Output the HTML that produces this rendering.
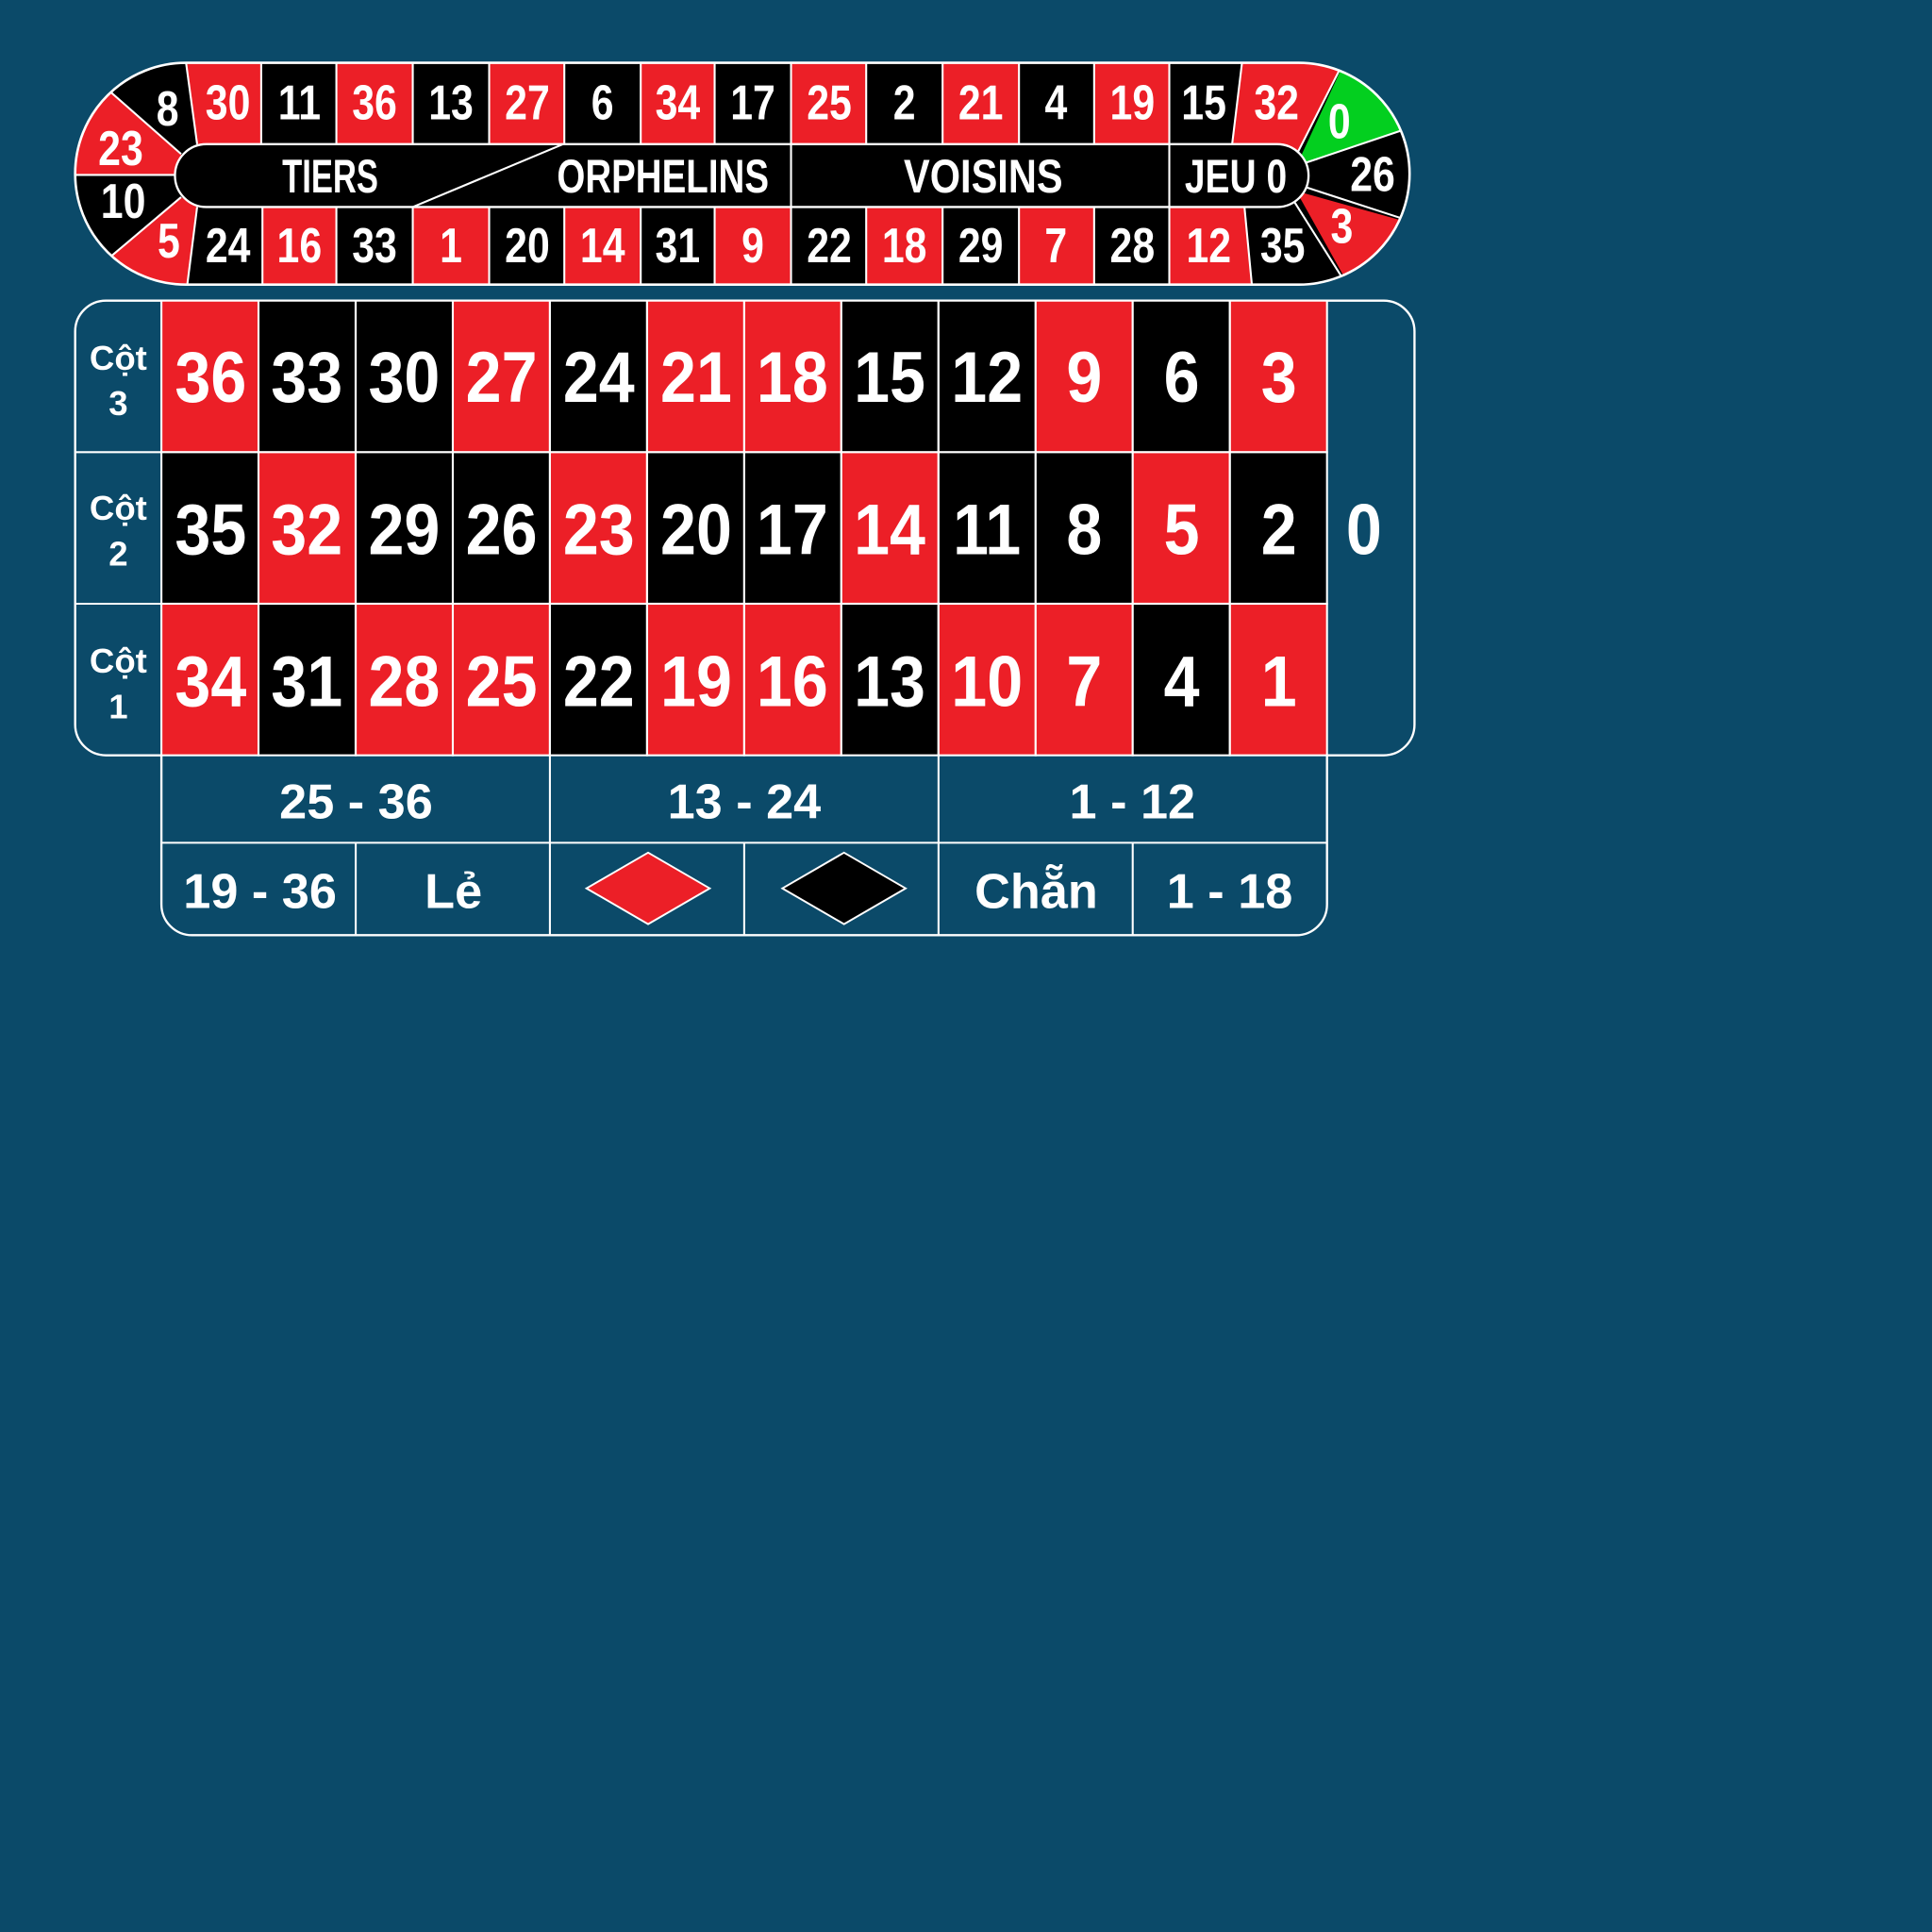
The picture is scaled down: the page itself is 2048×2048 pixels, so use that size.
<!DOCTYPE html>
<html><head><meta charset="utf-8"><style>
html,body{margin:0;padding:0;background:#0b4a69;}
svg{display:block}
text{font-family:"Liberation Sans",sans-serif;font-weight:bold;fill:#fff;text-anchor:middle}
.n text{transform-box:fill-box;transform-origin:center;transform:scaleX(.82)}
.g text{transform-box:fill-box;transform-origin:center;transform:scaleX(.9)}
</style></head><body>
<svg width="2048" height="2048" viewBox="0 0 1568 1568" xmlns="http://www.w3.org/2000/svg">
<rect width="1568" height="1568" fill="#0b4a69"/>
<defs><clipPath id="rt"><path d="M151,51 L1054,51 A90,90 0 0 1 1054,231 L151,231 A90,90 0 0 1 151,51 Z"/></clipPath></defs>
<g clip-path="url(#rt)">
<rect x="0" y="0" width="1200" height="260" fill="#000"/>
<g fill="#ec1f27">
<polygon points="147,125 40,31 0,31 0,142 147,142"/>
<polygon points="147,160 40,252 149,252 160,168"/>
<polygon points="150,40 212,40 212,117 160,117"/>
<rect x="273" y="40" width="62" height="77"/><rect x="397" y="40" width="61" height="77"/>
<rect x="520" y="40" width="60" height="77"/><rect x="642" y="40" width="61" height="77"/>
<rect x="765" y="40" width="62" height="77"/><rect x="888" y="40" width="61" height="77"/>
<polygon points="1009,40 1096,40 1045,140 997,140"/>
<polygon points="1052,155 1170,188 1170,250 1105,250"/>
<rect x="213" y="168" width="60" height="80"/><rect x="335" y="168" width="62" height="80"/>
<rect x="458" y="168" width="62" height="80"/><rect x="580" y="168" width="62" height="80"/>
<rect x="703" y="168" width="62" height="80"/><rect x="827" y="168" width="61" height="80"/>
<polygon points="949,168 1010,168 1017,250 949,250"/>
</g>
<polygon points="1096,40 1170,40 1170,95 1052,135" fill="#03cf1f"/>
<g stroke="#fff" stroke-width="1.6" fill="none">
<line x1="147" y1="125" x2="89" y2="74"/><line x1="61" y1="142" x2="142" y2="142"/><line x1="147" y1="160" x2="89" y2="209"/>
<line x1="151" y1="51" x2="160" y2="117"/><line x1="160" y1="168" x2="152" y2="231"/>
<path d="M212,51V117M273,51V117M335,51V117M397,51V117M458,51V117M520,51V117M580,51V117M642,51V117M703,51V117M765,51V117M827,51V117M888,51V117M949,51V117"/>
<path d="M213,168V231M273,168V231M335,168V231M397,168V231M458,168V231M520,168V231M580,168V231M642,168V231M703,168V231M765,168V231M827,168V231M888,168V231M949,168V231"/>
<line x1="1008" y1="51" x2="1000" y2="117"/><line x1="1087" y1="57" x2="1050" y2="130"/>
<line x1="1137" y1="106" x2="1060" y2="132"/><line x1="1137" y1="177" x2="1060" y2="152"/>
<line x1="1050" y1="163" x2="1091" y2="228"/><line x1="1010" y1="168" x2="1016" y2="231"/>
</g>
</g>
<path d="M151,51 L1054,51 A90,90 0 0 1 1054,231 L151,231 A90,90 0 0 1 151,51 Z" fill="none" stroke="#fff" stroke-width="2"/>
<rect x="142" y="117" width="920" height="51" rx="25.5" fill="#000" stroke="#fff" stroke-width="1.8"/>
<g stroke="#fff" stroke-width="1.6"><line x1="457" y1="117" x2="335" y2="168"/><line x1="642" y1="117" x2="642" y2="168"/><line x1="949" y1="117" x2="949" y2="168"/></g>
<g font-size="38">
<text x="268" y="156" textLength="78" lengthAdjust="spacingAndGlyphs">TIERS</text>
<text x="538" y="156" textLength="172" lengthAdjust="spacingAndGlyphs">ORPHELINS</text>
<text x="798" y="156" textLength="129" lengthAdjust="spacingAndGlyphs">VOISINS</text>
<text x="1003" y="156" textLength="83" lengthAdjust="spacingAndGlyphs">JEU 0</text>
</g>
<g font-size="40" class="n">
<text x="185" y="97">30</text><text x="243" y="97">11</text><text x="304" y="97">36</text><text x="366" y="97">13</text><text x="428" y="97">27</text><text x="489" y="97">6</text><text x="550" y="97">34</text><text x="611" y="97">17</text><text x="673" y="97">25</text><text x="734" y="97">2</text><text x="796" y="97">21</text><text x="857" y="97">4</text><text x="919" y="97">19</text><text x="977" y="97">15</text><text x="1036" y="97">32</text>
<text x="185" y="213">24</text><text x="243" y="213">16</text><text x="304" y="213">33</text><text x="366" y="213">1</text><text x="428" y="213">20</text><text x="489" y="213">14</text><text x="550" y="213">31</text><text x="611" y="213">9</text><text x="673" y="213">22</text><text x="734" y="213">18</text><text x="796" y="213">29</text><text x="857" y="213">7</text><text x="919" y="213">28</text><text x="981" y="213">12</text><text x="1041" y="213">35</text>
<text x="136" y="102">8</text><text x="98" y="134">23</text><text x="100" y="177">10</text><text x="137" y="209">5</text>
<text x="1087" y="112">0</text><text x="1114" y="155">26</text><text x="1089" y="197">3</text>
</g>
<path d="M86,244 L1123,244 A25,25 0 0 1 1148,269 L1148,588 A25,25 0 0 1 1123,613 L1077,613 L1077,734 A25,25 0 0 1 1052,759 L156,759 A25,25 0 0 1 131,734 L131,613 L86,613 A25,25 0 0 1 61,588 L61,269 A25,25 0 0 1 86,244 Z" fill="#0b4a69" stroke="#fff" stroke-width="1.8"/>
<g stroke="#fff" stroke-width="1.6">
<rect x="131" y="244" width="78.8" height="123" fill="#ec1f27"/><rect x="209.8" y="244" width="78.8" height="123" fill="#000"/><rect x="288.7" y="244" width="78.8" height="123" fill="#000"/><rect x="367.5" y="244" width="78.8" height="123" fill="#ec1f27"/><rect x="446.3" y="244" width="78.8" height="123" fill="#000"/><rect x="525.2" y="244" width="78.8" height="123" fill="#ec1f27"/><rect x="604" y="244" width="78.8" height="123" fill="#ec1f27"/><rect x="682.8" y="244" width="78.8" height="123" fill="#000"/><rect x="761.7" y="244" width="78.8" height="123" fill="#000"/><rect x="840.5" y="244" width="78.8" height="123" fill="#ec1f27"/><rect x="919.3" y="244" width="78.8" height="123" fill="#000"/><rect x="998.2" y="244" width="78.8" height="123" fill="#ec1f27"/>
<rect x="131" y="367" width="78.8" height="123" fill="#000"/><rect x="209.8" y="367" width="78.8" height="123" fill="#ec1f27"/><rect x="288.7" y="367" width="78.8" height="123" fill="#000"/><rect x="367.5" y="367" width="78.8" height="123" fill="#000"/><rect x="446.3" y="367" width="78.8" height="123" fill="#ec1f27"/><rect x="525.2" y="367" width="78.8" height="123" fill="#000"/><rect x="604" y="367" width="78.8" height="123" fill="#000"/><rect x="682.8" y="367" width="78.8" height="123" fill="#ec1f27"/><rect x="761.7" y="367" width="78.8" height="123" fill="#000"/><rect x="840.5" y="367" width="78.8" height="123" fill="#000"/><rect x="919.3" y="367" width="78.8" height="123" fill="#ec1f27"/><rect x="998.2" y="367" width="78.8" height="123" fill="#000"/>
<rect x="131" y="490" width="78.8" height="123" fill="#ec1f27"/><rect x="209.8" y="490" width="78.8" height="123" fill="#000"/><rect x="288.7" y="490" width="78.8" height="123" fill="#ec1f27"/><rect x="367.5" y="490" width="78.8" height="123" fill="#ec1f27"/><rect x="446.3" y="490" width="78.8" height="123" fill="#000"/><rect x="525.2" y="490" width="78.8" height="123" fill="#ec1f27"/><rect x="604" y="490" width="78.8" height="123" fill="#ec1f27"/><rect x="682.8" y="490" width="78.8" height="123" fill="#000"/><rect x="761.7" y="490" width="78.8" height="123" fill="#ec1f27"/><rect x="840.5" y="490" width="78.8" height="123" fill="#ec1f27"/><rect x="919.3" y="490" width="78.8" height="123" fill="#000"/><rect x="998.2" y="490" width="78.8" height="123" fill="#ec1f27"/>
<line x1="61" y1="367" x2="131" y2="367"/><line x1="61" y1="490" x2="131" y2="490"/>
<line x1="131" y1="684" x2="1077" y2="684"/>
<path d="M446.3,613V759M761.7,613V759M288.7,684V759M604,684V759M919.3,684V759"/>
</g>
<g font-size="58" class="g">
<text x="171" y="326">36</text><text x="249" y="326">33</text><text x="328" y="326">30</text><text x="407" y="326">27</text><text x="486" y="326">24</text><text x="565" y="326">21</text><text x="643" y="326">18</text><text x="722" y="326">15</text><text x="801" y="326">12</text><text x="880" y="326">9</text><text x="959" y="326">6</text><text x="1038" y="326">3</text>
<text x="171" y="450">35</text><text x="249" y="450">32</text><text x="328" y="450">29</text><text x="407" y="450">26</text><text x="486" y="450">23</text><text x="565" y="450">20</text><text x="643" y="450">17</text><text x="722" y="450">14</text><text x="801" y="450">11</text><text x="880" y="450">8</text><text x="959" y="450">5</text><text x="1038" y="450">2</text>
<text x="171" y="573">34</text><text x="249" y="573">31</text><text x="328" y="573">28</text><text x="407" y="573">25</text><text x="486" y="573">22</text><text x="565" y="573">19</text><text x="643" y="573">16</text><text x="722" y="573">13</text><text x="801" y="573">10</text><text x="880" y="573">7</text><text x="959" y="573">4</text><text x="1038" y="573">1</text>
<text x="1107" y="450">0</text>
</g>
<g font-size="28">
<text x="96" y="300">Cột</text><text x="96" y="337">3</text>
<text x="96" y="422">Cột</text><text x="96" y="459">2</text>
<text x="96" y="546">Cột</text><text x="96" y="583">1</text>
</g>
<g font-size="40">
<text x="289" y="664">25 - 36</text><text x="604" y="664">13 - 24</text><text x="919" y="664">1 - 12</text>
<text x="211" y="737">19 - 36</text><text x="368" y="737">Lẻ</text><text x="841" y="737">Chẵn</text><text x="998" y="737">1 - 18</text>
</g>
<polygon points="476,721 526,692 576,721 526,750" fill="#ec1f27" stroke="#fff" stroke-width="1.5"/>
<polygon points="635,721 685,692 735,721 685,750" fill="#000" stroke="#fff" stroke-width="1.5"/>
</svg>
</body></html>
